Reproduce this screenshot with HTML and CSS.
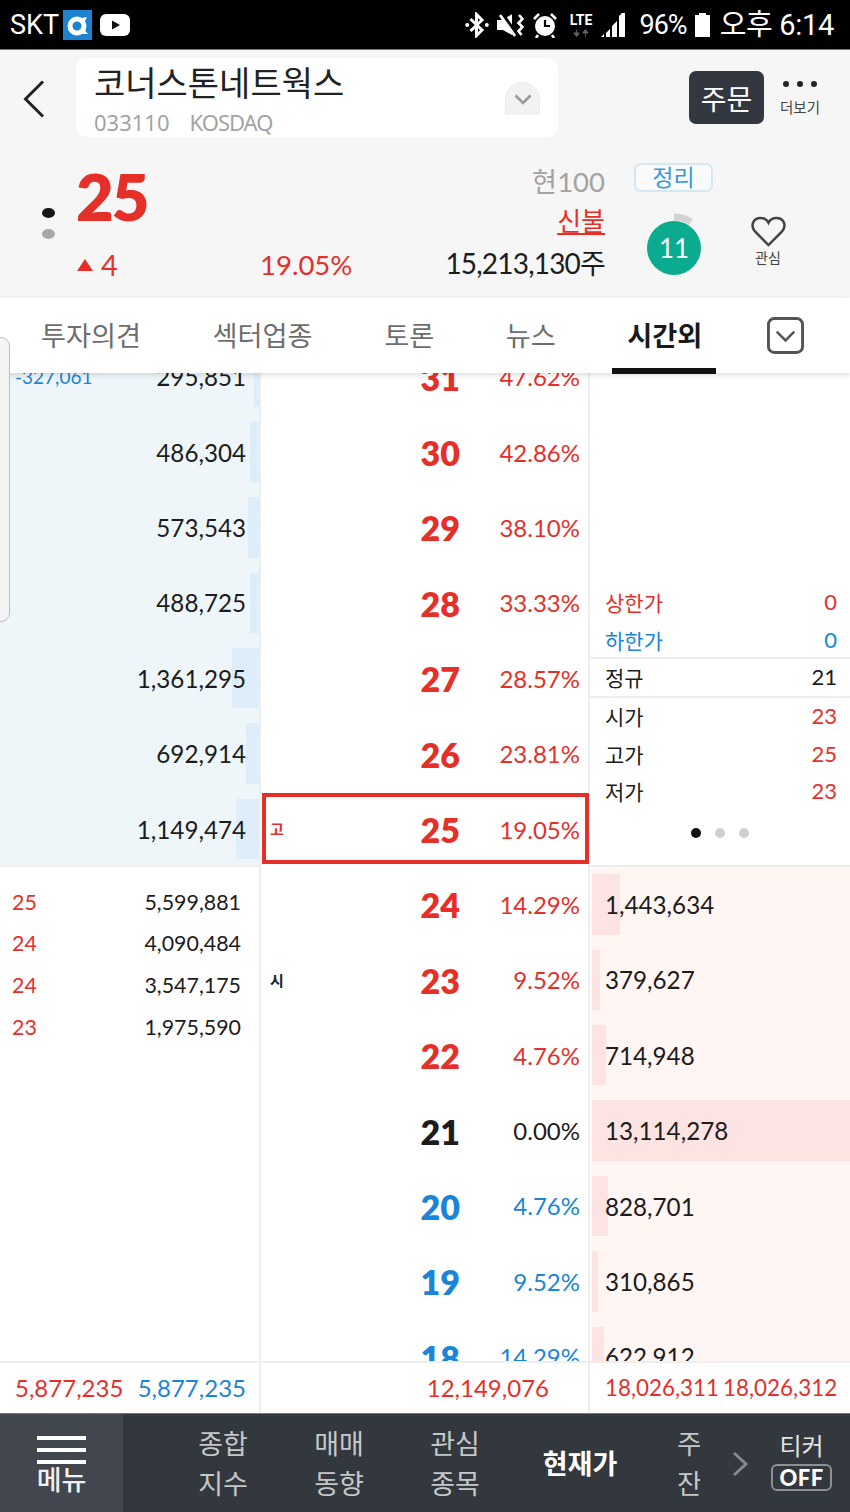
FILE: index.html
```html
<!DOCTYPE html>
<html lang="ko">
<head>
<meta charset="utf-8">
<title>코너스톤네트웍스</title>
<link rel="stylesheet" href="styles.css">
</head>
<body>
<div class="app">
  <div class="status">
    <div class="status-left">
      <span class="carrier">SKT</span>
      <svg class="app-ic" viewBox="0 0 29 30"><rect width="29" height="30" fill="#1b83d0"/><circle cx="14" cy="16" r="7" fill="none" stroke="#fff" stroke-width="5"/><path d="M14 9 L24 7 L21 13Z M19 17 L25 24 L19 24Z" fill="#fff"/></svg>
      <svg class="yt-ic" viewBox="0 0 30 22"><rect width="30" height="22" rx="6" fill="#fff"/><path d="M12 6.500 L20 11 L12 15.500Z" fill="#111"/></svg>
    </div>
    <div class="status-right">
      <svg class="st-bt" viewBox="0 0 24 26"><path d="M5.500 7 L17 18 L11.500 23.500 V2.500 L17 8 L5.500 19" fill="none" stroke="#fff" stroke-width="3"/><circle cx="2.200" cy="13" r="2" fill="#fff"/><circle cx="21.800" cy="13" r="2" fill="#fff"/></svg>
      <svg class="st-mute" viewBox="0 0 27 26"><path d="M0 8 H6 L15 2 V23 L6 18 H0Z" fill="#fff"/><path d="M3 0 L20 24" stroke="#000" stroke-width="5"/><path d="M3 3 L18 24" stroke="#fff" stroke-width="2.800"/><path d="M22 3 L25.500 7 L21.500 11 L25.500 15 L21.500 19 L24.500 23" fill="none" stroke="#fff" stroke-width="2.600"/></svg>
      <svg class="st-alarm" viewBox="0 0 24 26"><circle cx="12" cy="14" r="10" fill="#fff"/><path d="M12 8 V14 H17" fill="none" stroke="#000" stroke-width="2.200"/><path d="M1 7 L6 2 M23 7 L18 2 M5 23 L3 26 M19 23 L21 26" stroke="#fff" stroke-width="2.600"/></svg>
      <span class="st-lte"><span class="lte-txt">LTE</span><svg class="lte-arrows" viewBox="0 0 18 8"><path d="M4 0 V4 M1 4 H7 L4 8Z M14 8 V4 M11 4 H17 L14 0Z" stroke="#666" fill="#666"/></svg></span>
      <svg class="st-sig" viewBox="0 0 25 24"><path d="M0 24 H3 V21Z M5 24 H9 V16 L5 20Z" fill="#fff"/><path d="M11 24 H16 V8 L11 13Z M18 24 H24 V0 H21 L18 3Z" fill="#fff"/></svg>
      <span class="st-pct">96%</span>
      <svg class="st-bat" viewBox="0 0 15 24"><path d="M4 0 H11 V2 H15 V24 H0 V2 H4Z" fill="#fff"/></svg>
      <span class="st-time">오후 6:14</span>
    </div>
  </div>

  <div class="summary-head">
    <div class="top-row">
      <svg class="back" viewBox="0 0 22 38"><path d="M20 1.500 L2.500 19 L20 36.500" fill="none" stroke="#222" stroke-width="3"/></svg>
      <div class="name-card">
        <div class="name-text">
          <div class="stock-name">코너스톤네트웍스</div>
          <div class="stock-code"><span>033110</span><span class="stock-market">KOSDAQ</span></div>
        </div>
        <div class="name-chev"><svg viewBox="0 0 18 11"><path d="M1.500 1.500 L9 9 L16.500 1.500" fill="none" stroke="#999" stroke-width="2.600"/></svg></div>
      </div>
      <button class="order-btn">주문</button>
      <div class="more">
        <div class="more-dots"><i></i><i></i><i></i></div>
        <div class="more-label">더보기</div>
      </div>
    </div>
    <div class="price-row">
      <div class="dots-col"><i class="dot-a"></i><i class="dot-b"></i></div>
      <div class="price-main">
        <div class="price-big">25</div>
        <div class="price-change"><i class="tri"></i><span>4</span></div>
      </div>
      <div class="price-pct">19.05%</div>
      <div class="price-info">
        <div class="info-a">현100</div>
        <div class="info-b">신불</div>
        <div class="info-c">15,213,130주</div>
      </div>
      <div class="badge-col">
        <div class="badge">정리</div>
        <div class="timer">
          <svg class="timer-arc" viewBox="0 0 70 70"><path d="M35 4 A31 31 0 0 1 52 9" fill="none" stroke="#d2d2d2" stroke-width="7"/></svg>
          <span class="timer-circle">11</span>
        </div>
      </div>
      <div class="fav">
        <svg viewBox="0 0 36 32"><path d="M18 30 L4 16 C-1 10 2 2 10 2 C14 2 16.500 4 18 7 C19.500 4 22 2 26 2 C34 2 37 10 32 16Z" fill="none" stroke="#444" stroke-width="2.600"/></svg>
        <div class="fav-label">관심</div>
      </div>
    </div>
  </div>

  <div class="tabs">
    <div class="tab">투자의견</div>
    <div class="tab">섹터업종</div>
    <div class="tab">토론</div>
    <div class="tab">뉴스</div>
    <div class="tab tab-on">시간외</div>
    <svg class="tab-more" viewBox="0 0 38 38"><rect x="1.500" y="1.500" width="35" height="35" rx="6" fill="none" stroke="#555" stroke-width="3"/><path d="M10 15 L19 24 L28 15" fill="none" stroke="#555" stroke-width="2.600"/></svg>
  </div>

  <div class="book">
    <div class="book-inner">
      <div class="col col-left">
        <div class="asks">
          <div class="vrow"><span class="vbar bar-blue" style="width:5px"></span><span class="vextra">-327,061</span><span class="vnum">295,851</span></div>
          <div class="vrow"><span class="vbar bar-blue" style="width:9px"></span><span class="vnum">486,304</span></div>
          <div class="vrow"><span class="vbar bar-blue" style="width:11px"></span><span class="vnum">573,543</span></div>
          <div class="vrow"><span class="vbar bar-blue" style="width:9px"></span><span class="vnum">488,725</span></div>
          <div class="vrow"><span class="vbar bar-blue" style="width:27px"></span><span class="vnum">1,361,295</span></div>
          <div class="vrow"><span class="vbar bar-blue" style="width:13px"></span><span class="vnum">692,914</span></div>
          <div class="vrow"><span class="vbar bar-blue" style="width:23px"></span><span class="vnum">1,149,474</span></div>
        </div>
        <div class="trades">
          <div class="trade"><span class="red">25</span><span>5,599,881</span></div>
          <div class="trade"><span class="red">24</span><span>4,090,484</span></div>
          <div class="trade"><span class="red">24</span><span>3,547,175</span></div>
          <div class="trade"><span class="red">23</span><span>1,975,590</span></div>
        </div>
      </div>

      <div class="col col-mid">
        <div class="prow red"><span class="mark"></span><span class="pval">31</span><span class="ppct">47.62%</span></div>
        <div class="prow red"><span class="mark"></span><span class="pval">30</span><span class="ppct">42.86%</span></div>
        <div class="prow red"><span class="mark"></span><span class="pval">29</span><span class="ppct">38.10%</span></div>
        <div class="prow red"><span class="mark"></span><span class="pval">28</span><span class="ppct">33.33%</span></div>
        <div class="prow red"><span class="mark"></span><span class="pval">27</span><span class="ppct">28.57%</span></div>
        <div class="prow red"><span class="mark"></span><span class="pval">26</span><span class="ppct">23.81%</span></div>
        <div class="prow red prow-now"><span class="mark">고</span><span class="pval">25</span><span class="ppct">19.05%</span></div>
        <div class="prow red"><span class="mark"></span><span class="pval">24</span><span class="ppct">14.29%</span></div>
        <div class="prow red"><span class="mark mark-dark">시</span><span class="pval">23</span><span class="ppct">9.52%</span></div>
        <div class="prow red"><span class="mark"></span><span class="pval">22</span><span class="ppct">4.76%</span></div>
        <div class="prow dark"><span class="mark"></span><span class="pval">21</span><span class="ppct">0.00%</span></div>
        <div class="prow blue"><span class="mark"></span><span class="pval">20</span><span class="ppct">4.76%</span></div>
        <div class="prow blue"><span class="mark"></span><span class="pval">19</span><span class="ppct">9.52%</span></div>
        <div class="prow blue"><span class="mark"></span><span class="pval">18</span><span class="ppct">14.29%</span></div>
      </div>

      <div class="col col-right">
        <div class="panel">
          <div class="pgroup pgroup-first">
            <div class="irow red"><span>상한가</span><span class="ival">0</span></div>
            <div class="irow blue"><span>하한가</span><span class="ival">0</span></div>
          </div>
          <div class="pgroup">
            <div class="irow"><span>정규</span><span class="ival">21</span></div>
          </div>
          <div class="pgroup pgroup-last">
            <div class="irow"><span>시가</span><span class="ival red">23</span></div>
            <div class="irow"><span>고가</span><span class="ival red">25</span></div>
            <div class="irow"><span>저가</span><span class="ival red">23</span></div>
          </div>
          <div class="pager"><i class="on"></i><i></i><i></i></div>
        </div>
        <div class="bids">
          <div class="vrow"><span class="vbar bar-pink" style="width:28px"></span><span class="vnum">1,443,634</span></div>
          <div class="vrow"><span class="vbar bar-pink" style="width:8px"></span><span class="vnum">379,627</span></div>
          <div class="vrow"><span class="vbar bar-pink" style="width:14px"></span><span class="vnum">714,948</span></div>
          <div class="vrow"><span class="vbar bar-pink" style="width:258px"></span><span class="vnum">13,114,278</span></div>
          <div class="vrow"><span class="vbar bar-pink" style="width:16px"></span><span class="vnum">828,701</span></div>
          <div class="vrow"><span class="vbar bar-pink" style="width:6px"></span><span class="vnum">310,865</span></div>
          <div class="vrow"><span class="vbar bar-pink" style="width:12px"></span><span class="vnum">622,912</span></div>
        </div>
      </div>
    </div>
  </div>

  <div class="totals">
    <div class="tot tot-left"><span class="red">5,877,235</span><span class="blue">5,877,235</span></div>
    <div class="tot tot-mid"><span class="red">12,149,076</span></div>
    <div class="tot tot-right"><span class="red">18,026,311</span><span class="red">18,026,312</span></div>
  </div>

  <div class="nav">
    <div class="nav-menu">
      <div class="burger"><i></i><i></i><i></i></div>
      <div class="menu-label">메뉴</div>
    </div>
    <div class="nav-items">
      <div class="nav-item">종합<br>지수</div>
      <div class="nav-item">매매<br>동향</div>
      <div class="nav-item">관심<br>종목</div>
      <div class="nav-item nav-on">현재가</div>
      <div class="nav-item nav-clip"><span>주<br>잔</span></div>
    </div>
    <svg class="nav-chev" viewBox="0 0 17 26"><path d="M2 2 L14 13 L2 24" fill="none" stroke="#85888c" stroke-width="3"/></svg>
    <div class="ticker">
      <div class="ticker-label">티커</div>
      <div class="ticker-off">OFF</div>
    </div>
  </div>

  <div class="edge-handle"></div>
</div>
</body>
</html>
```

FILE: styles.css
```css
* { box-sizing: border-box; }
html, body { margin: 0; padding: 0; }
body { font-family: Lato, "Noto Sans CJK KR", sans-serif; color: #1c1c1c; background: #fff; }
i { display: block; font-style: normal; }
.red { color: #e5302a; }
.blue { color: #1a85d6; }
.dark { color: #1c1c1c; }

.app { position: relative; width: 850px; height: 1512px; overflow: hidden; display: flex; flex-direction: column; }

/* status bar */
.status { height: 50px; flex: none; background: #000; border-bottom: 1px solid #777; display: flex; justify-content: space-between; align-items: center; padding: 0 16px 0 10px; color: #fff; }
.status-left { display: flex; align-items: center; }
.carrier { font: 27px/30px Roboto, sans-serif; width: 53px; }
.app-ic { width: 29px; height: 30px; }
.yt-ic { width: 30px; height: 22px; margin-left: 8px; }
.status-right { display: flex; align-items: center; }
.st-bt { width: 24px; height: 26px; }
.st-mute { width: 27px; height: 26px; margin-left: 8px; }
.st-alarm { width: 24px; height: 26px; margin-left: 9px; }
.st-lte { display: flex; flex-direction: column; align-items: center; width: 27px; margin-left: 11px; }
.lte-txt { font: 700 14px/14px Roboto, sans-serif; }
.lte-arrows { width: 16px; height: 8px; margin-top: 2px; }
.st-sig { width: 25px; height: 24px; margin-left: 6px; }
.st-pct { font: 27px/30px Roboto, sans-serif; letter-spacing: -1px; margin-left: 14px; }
.st-bat { width: 15px; height: 24px; margin-left: 8px; }
.st-time { font: 29px/32px Roboto, "Noto Sans CJK KR", sans-serif; margin-left: 10px; letter-spacing: -.3px; }

/* header */
.summary-head { height: 248px; flex: none; background: #f6f6f6; }
.top-row { height: 98px; display: flex; align-items: flex-start; padding: 8px 0 0 23px; }
.back { width: 22px; height: 38px; margin-top: 22px; }
.name-card { width: 482px; height: 79px; margin-left: 31px; background: #fff; border-radius: 10px; display: flex; justify-content: space-between; padding: 0 18px 0 18px; }
.stock-name { font: 34px/46px "Noto Sans CJK KR", sans-serif; margin-top: 1px; color: #222; }
.stock-code { font: 22px/26px "Noto Sans", sans-serif; color: #a3a3a3; display: flex; gap: 20px; margin-top: 4px; }
.stock-market { letter-spacing: -1px; }
.name-chev { width: 35px; height: 33px; margin-top: 24px; border-radius: 18px 18px 0 0; background: #f2f2f2; border: 1px solid #ececec; border-bottom: 0; display: flex; justify-content: center; padding-top: 11px; overflow: hidden; }
.name-chev svg { width: 18px; height: 11px; }
.order-btn { width: 75px; height: 53px; margin: 13px 0 0 131px; border: 0; border-radius: 7px; background: #33373f; color: #fff; font: 28px/36px "Noto Sans CJK KR", sans-serif; padding: 0; }
.more { width: 48px; margin: 18px 0 0 12px; display: flex; flex-direction: column; align-items: center; }
.more-dots { display: flex; gap: 8px; height: 16px; align-items: center; }
.more-dots i { width: 6px; height: 6px; border-radius: 50%; background: #222; }
.more-label { font: 14.500px/20px "Noto Sans CJK KR", sans-serif; color: #444; margin-top: 5px; }

.price-row { height: 150px; display: flex; align-items: flex-start; position: relative; }
.dots-col { width: 76px; padding: 60px 0 0 42px; }
.dot-a, .dot-b { width: 13px; height: 10px; border-radius: 50%; }
.dot-a { background: #161616; }
.dot-b { background: #a8a8a8; margin-top: 11px; }
.price-main { width: 184px; }
.price-big { font: 800 65px/70px Lato, sans-serif; letter-spacing: -2px; color: #e5302a; margin-top: 13px; }
.price-change { display: flex; align-items: center; margin-top: 17px; color: #e5302a; font: 29px/34px Lato, sans-serif; }
.tri { width: 0; height: 0; border-left: 8px solid transparent; border-right: 8px solid transparent; border-bottom: 12px solid #e5302a; margin: 0 8px 0 1px; }
.price-pct { width: 100px; font: 27.500px/34px Lato, sans-serif; color: #e5302a; margin-top: 100px; }
.price-info { width: 245px; text-align: right; }
.info-a { font: 27.500px/36px Lato, "Noto Sans CJK KR", sans-serif; color: #a3a3a3; margin-top: 16px; }
.info-b { font: 26px/36px "Noto Sans CJK KR", sans-serif; color: #e5302a; text-decoration: underline; text-underline-offset: 2px; margin-top: 2px; }
.info-c { font: 28px/36px Lato, "Noto Sans CJK KR", sans-serif; letter-spacing: -.8px; margin-top: 7px; }
.badge-col { width: 79px; margin-left: 29px; }
.badge { width: 79px; height: 29px; margin-top: 15px; border: 2px solid #d3e7f4; border-radius: 7px; background: #fafafa; color: #3a9bd9; font: 23px/23px "Noto Sans CJK KR", sans-serif; text-align: center; }
.timer { position: relative; width: 54px; height: 54px; margin: 29px 0 0 13px; }
.timer-arc { position: absolute; left: -8px; top: -8px; width: 70px; height: 70px; }
.timer-circle { position: absolute; inset: 0; border-radius: 50%; background: #0bab8f; color: #fff; font: 26px/54px Lato, sans-serif; text-align: center; }
.fav { width: 40px; margin: 68px 0 0 35px; display: flex; flex-direction: column; align-items: center; }
.fav svg { width: 35px; height: 31px; }
.fav-label { font: 14px/18px "Noto Sans CJK KR", sans-serif; color: #444; margin-top: 1px; }

/* tabs */
.tabs { height: 75px; flex: none; background: #fff; display: flex; align-items: center; gap: 71.500px; padding: 0 0 4px 41px; position: relative; z-index: 2; box-shadow: 0 2px 6px rgba(0,0,0,.14); }
.tab { font: 27.200px/40px "Noto Sans CJK KR", sans-serif; color: #6d6d6d; position: relative; white-space: nowrap; }
.tab-on { color: #1a1a1a; font-weight: 700; }
.tab-on::after { content: ""; position: absolute; left: -15px; right: -14px; top: 54px; height: 6px; background: #111; }
.tab-more { width: 37px; height: 37px; margin: 4px 0 0 -6.500px; }

/* book */
.book { height: 990px; flex: none; overflow: hidden; background: #fff; border-bottom: 2px solid #eee; }
.book-inner { margin-top: -34px; display: grid; grid-template-columns: 259px 331px 260px; }
.col-mid { border-left: 2px solid #eee; border-right: 2px solid #eee; }
.asks { background: #eef6fa; border-bottom: 2px solid #eee; height: 527.800px; }
.vrow { position: relative; height: 75.400px; display: flex; align-items: center; font-size: 24.200px; }
.asks .vrow { justify-content: flex-end; padding-right: 13px; }
.bids .vrow { padding-left: 14px; }
.vnum { position: relative; }
.vextra { position: absolute; left: 15px; top: 26px; font-size: 19px; line-height: 24px; color: #1a85d6; }
.vbar { position: absolute; top: 7.500px; height: 60.400px; }
.bar-blue { right: 0; background: #ddeefa; }
.bar-pink { left: 1px; background: #fde4e3; }
.trades { padding-top: 14px; }
.trade { height: 41.700px; display: flex; justify-content: space-between; align-items: center; font-size: 21.400px; padding: 0 18px 0 12px; }

.prow { position: relative; height: 75.400px; display: grid; grid-template-columns: 1fr 60px 120px; align-items: center; padding: 0 8px 0 9px; }
.mark { font: 700 15px/20px "Noto Sans CJK KR", sans-serif; color: #e5302a; }
.mark-dark { color: #222; }
.pval { font: 800 34px/40px Lato, sans-serif; text-align: right; padding-top: 2px; }
.ppct { font-size: 24px; line-height: 30px; text-align: right; padding-top: 1px; }
.prow-now::after { content: ""; position: absolute; left: 1px; right: -1px; top: 1.500px; bottom: 2.500px; border: 4px solid #e5302a; }

.panel { height: 527.800px; display: flex; flex-direction: column; justify-content: flex-end; border-bottom: 2px solid #eee; }
.pgroup { border-bottom: 2px solid #eee; }
.pgroup-last { border-bottom: 0; }
.irow { height: 37.500px; display: flex; justify-content: space-between; align-items: center; font: 21px/28px "Noto Sans CJK KR", sans-serif; padding: 0 13px 2px 15px; }
.pgroup-first .irow { height: 38px; padding: 4px 13px 0 15px; }
.ival { font: 22px/28px Lato, sans-serif; }
.pager { height: 54px; display: flex; justify-content: center; align-items: center; gap: 14px; padding-bottom: 9px; }
.pager i { width: 10px; height: 10px; border-radius: 50%; background: #cfcfcf; }
.pager .on { background: #111; }
.bids { background: #fff5f3; overflow: hidden; margin-left: 1px; }

/* totals */
.totals { height: 51px; flex: none; display: grid; grid-template-columns: 259px 331px 260px; align-items: stretch; font-size: 24px; border-bottom: 1px solid #777; background: #fff; }
.tot { display: flex; align-items: center; padding-bottom: 2px; }
.tot-left { justify-content: space-between; padding-left: 15px; padding-right: 13px; }
.tot-mid { border-left: 2px solid #eee; border-right: 2px solid #eee; justify-content: flex-end; padding-right: 39px; }
.tot-right { gap: 4px; padding-left: 15px; font-size: 22.400px; }

/* nav */
.nav { flex: 1; background: #33383f; display: flex; color: #c5c7c9; }
.nav-menu { width: 123px; flex: none; background: #42464e; display: flex; flex-direction: column; align-items: center; padding-top: 22px; }
.burger { display: flex; flex-direction: column; gap: 8px; width: 49px; }
.burger i { height: 4px; background: #fff; }
.menu-label { font: 500 27px/30px "Noto Sans CJK KR", sans-serif; color: #f0f0f0; }
.nav-items { display: flex; width: 577px; flex: none; padding-left: 42px; }
.nav-item { width: 116px; font: 27px/40px "Noto Sans CJK KR", sans-serif; text-align: center; display: flex; align-items: center; justify-content: center; }
.nav-on { width: 134px; color: #fff; font-weight: 700; }
.nav-clip { width: 53px; justify-content: flex-start; padding-left: 29px; overflow: hidden; }
.nav-clip span { display: block; flex: none; width: 27px; }
.nav-chev { width: 17px; height: 26px; margin: 37px 0 0 32px; flex: none; }
.ticker { width: 61px; margin-left: 22px; display: flex; flex-direction: column; align-items: center; padding-top: 16px; color: #e4e4e4; }
.ticker-label { font: 24px/30px "Noto Sans CJK KR", sans-serif; }
.ticker-off { width: 61px; height: 27px; margin-top: 4px; border: 2px solid #8e9093; border-radius: 6px; font: 900 22px/23px Lato, sans-serif; text-align: center; color: #fff; letter-spacing: .5px; }

.edge-handle { position: absolute; left: -8px; top: 337px; width: 18px; height: 285px; background: #f4f4f4; border: 1px solid #bdbdbd; border-radius: 9px; z-index: 3; }
```
